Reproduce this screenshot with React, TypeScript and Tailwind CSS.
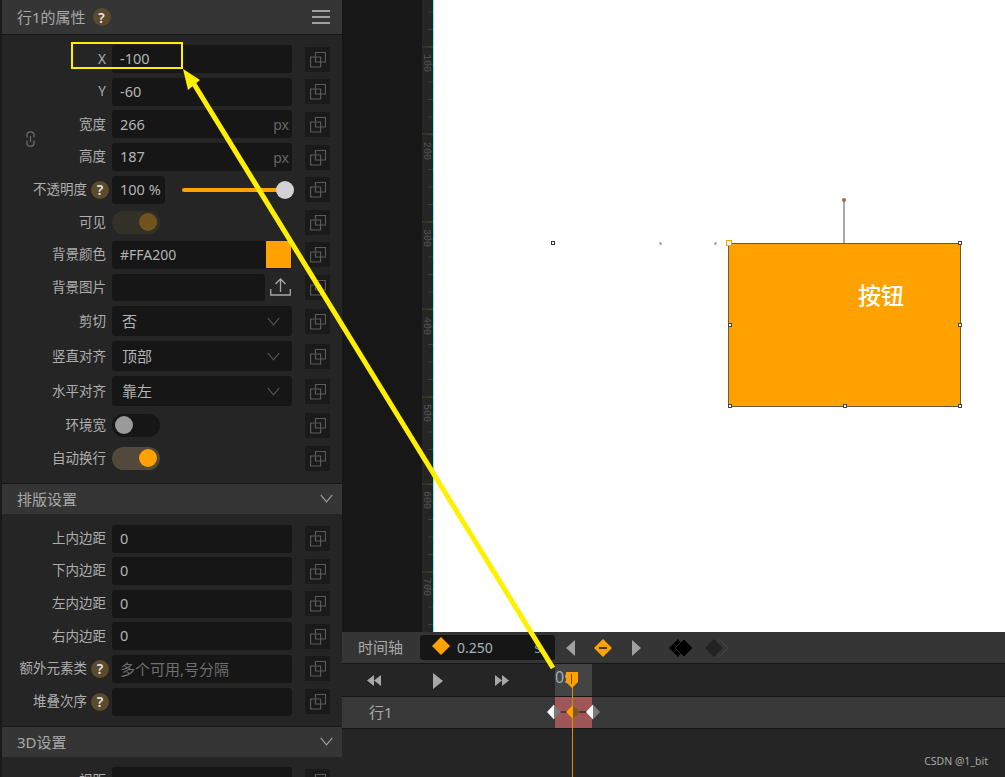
import React from 'react';

const font = { fontFamily: '"Noto Sans", "Noto Sans CJK SC", sans-serif' };

const CopyIcon = () => (
  <div className="w-[25px] h-[25px] bg-[#1a1a1a] flex items-center justify-center shrink-0 ml-[13px]">
    <svg width="16" height="17" viewBox="0 0 16 17" fill="none" stroke="#5a5a5a" strokeWidth="1.2">
      <path d="M5.5 5V1.5h10v9.5H11" />
      <path d="M.6 6h10v10H.6z" />
      <path d="M5.5 5.5v5.5H11" />
    </svg>
  </div>
);

const Help = () => (
  <span className="w-[18px] h-[18px] rounded-full bg-[#5c4a2c] text-[#e6e6e6] text-[14px] font-semibold flex items-center justify-center shrink-0 ml-[4px] mr-[3px]">
    ?
  </span>
);

const Chevron = ({ color = '#555555' }: { color?: string }) => (
  <svg width="13" height="9" viewBox="0 0 13 9" fill="none" stroke={color} strokeWidth="1.1">
    <path d="M.7.8l5.8 7 5.8-7" />
  </svg>
);

const Label = ({ text, help, h = 'h-[32.6px]', children }: { text: string; help?: boolean; h?: string; children: React.ReactNode }) => (
  <div className={`flex items-center pr-[12px] ${h}`}>
    <div className="w-[110px] flex items-center justify-end shrink-0">
      <span className={`text-[13.5px] leading-none text-[#aeaeae] whitespace-nowrap ${help ? '' : 'mr-[6px]'}`}>
        {text}
      </span>
      {help && <Help />}
    </div>
    <div className="w-[180px] flex items-center shrink-0">{children}</div>
    <CopyIcon />
  </div>
);

const Field = ({ value, unit, muted }: { value?: string; unit?: string; muted?: boolean }) => (
  <div className="w-full h-[28px] rounded-[3px] bg-[#161616] flex items-center justify-between pl-[8px] pr-[3px]">
    <span className={`${muted ? 'text-[15px] text-[#6f6f6f]' : 'text-[14.5px] text-[#b4b4b4]'}`}>{value}</span>
    {unit && <span className="text-[14px] text-[#666666]">{unit}</span>}
  </div>
);

const SelectBox = ({ value }: { value: string }) => (
  <div className="w-full h-[30px] rounded-[3px] bg-[#161616] flex items-center justify-between pl-[10px] pr-[12px]">
    <span className="text-[15px] text-[#b4b4b4]">{value}</span>
    <Chevron />
  </div>
);

const Toggle = ({ on, dim }: { on?: boolean; dim?: boolean }) => (
  <div
    className={`w-[48px] h-[23px] rounded-full flex items-center px-[3px] ${on ? 'justify-end' : 'justify-start'} ${
      dim ? 'bg-[#333028]' : on ? 'bg-[#514a3c]' : 'bg-[#161616]'
    }`}
  >
    <div className={`w-[18px] h-[18px] rounded-full ${dim ? 'bg-[#70531f]' : on ? 'bg-[#ffa200]' : 'bg-[#9a9a9a]'}`} />
  </div>
);

const SectionHeader = ({ title }: { title: string }) => (
  <div className="h-[31px] bg-[#353535] border-t border-[#161616] flex items-center justify-between pl-[15px] pr-[9px]">
    <span className="text-[15px] text-[#a8a8a8]">{title}</span>
    <Chevron color="#a0a0a0" />
  </div>
);

const paddingRows = ['上内边距', '下内边距', '左内边距', '右内边距'];

const Diamond = ({ size, className }: { size: number; className: string }) => (
  <svg width={size} height={size} viewBox="0 0 10 10" className={className}>
    <path d="M5 0l5 5-5 5-5-5z" fill="currentColor" />
  </svg>
);

const rulerMarks = [
  [47, '100', 63], [134, '200', 151], [222, '300', 238], [309, '400', 326],
  [397, '500', 413], [484, '600', 500], [572, '700', 587],
] as const;

const Ruler = () => (
  <svg width="11" height="632" className="block">
    {Array.from({ length: 37 }, (_, i) => 12 + i * 17.5).map((y) => (
      <line key={y} x1="6" x2="11" y1={y} y2={y} stroke="#3d3d3d" />
    ))}
    {rulerMarks.map(([y, label, ty]) => (
      <g key={label}>
        <line x1="0" x2="11" y1={y} y2={y} stroke="#4a4028" />
        <text
          x="0"
          y="0"
          transform={`translate(2 ${ty}) rotate(90)`}
          textAnchor="middle"
          fontSize="10"
          fill="#555555"
          fontFamily='"Liberation Mono", monospace'
        >
          {label}
        </text>
      </g>
    ))}
  </svg>
);

const Handle = ({ x, y }: { x: number; y: number }) => (
  <div className="absolute w-[4px] h-[4px] bg-white border border-[#444444]" style={{ left: x - 2, top: y - 2 }} />
);

export default function App() {
  return (
    <div className="relative w-[1005px] h-[777px] overflow-hidden flex bg-[#171717]" style={font}>
      {/* Property panel */}
      <div className="relative w-[342px] h-[777px] shrink-0 bg-[#252525] border-l-2 border-[#1a1a1a] overflow-hidden">
        <div className="h-[34px] bg-[#353535] flex items-center justify-between pl-[15px] pr-[12px]">
          <div className="flex items-center">
            <span className="text-[15px] text-[#a8a8a8]">行1的属性</span>
            <span className="ml-[3px]"><Help /></span>
          </div>
          <div className="w-[18px] flex flex-col gap-[4px]">
            <div className="h-[2px] bg-[#a0a0a0]" />
            <div className="h-[2px] bg-[#a0a0a0]" />
            <div className="h-[2px] bg-[#a0a0a0]" />
          </div>
        </div>

        <div className="pt-[8px] pb-[8px] border-t border-[#161616]">
          <Label text="X"><Field value="-100" /></Label>
          <Label text="Y"><Field value="-60" /></Label>
          <Label text="宽度"><Field value="266" unit="px" /></Label>
          <Label text="高度"><Field value="187" unit="px" /></Label>
          <Label text="不透明度" help>
            <div className="w-[53px] h-[28px] rounded-[3px] bg-[#161616] flex items-center pl-[8px] text-[14.5px] text-[#b4b4b4] shrink-0 whitespace-nowrap">
              100 %
            </div>
            <div className="relative ml-[17px] w-[103px] h-[4px] rounded-full bg-[#ffa200]">
              <div className="absolute right-[-9px] top-[-7px] w-[18px] h-[18px] rounded-full bg-[#d2d2d2]" />
            </div>
          </Label>
          <Label text="可见"><Toggle on dim /></Label>
          <Label text="背景颜色">
            <div className="w-full h-[28px] rounded-[3px] bg-[#161616] flex items-center justify-between pl-[8px] pr-[1px]">
              <span className="text-[14px] text-[#b4b4b4]">#FFA200</span>
              <div className="w-[25px] h-[27px] bg-[#ffa200]" />
            </div>
          </Label>
          <Label text="背景图片">
            <div className="w-[153px] h-[27px] rounded-[3px] bg-[#161616] shrink-0" />
            <svg width="21" height="18" viewBox="0 0 21 18" fill="none" stroke="#a8a8a8" strokeWidth="1.3" className="ml-[5px]">
              <path d="M10.5 14V1M5.5 6l5-5 5 5M.7 11v6h19.6v-6" />
            </svg>
          </Label>
          <Label text="剪切" h="h-[35px]"><SelectBox value="否" /></Label>
          <Label text="竖直对齐" h="h-[35px]"><SelectBox value="顶部" /></Label>
          <Label text="水平对齐" h="h-[35px]"><SelectBox value="靠左" /></Label>
          <Label text="环境宽" h="h-[33px]"><Toggle /></Label>
          <Label text="自动换行" h="h-[33px]"><Toggle on /></Label>
        </div>

        <SectionHeader title="排版设置" />
        <div className="pt-[8.5px] pb-[8px]">
          {paddingRows.map((name) => (
            <Label key={name} text={name}><Field value="0" /></Label>
          ))}
          <Label text="额外元素类" help><Field value="多个可用,号分隔" muted /></Label>
          <Label text="堆叠次序" help><Field /></Label>
        </div>

        <SectionHeader title="3D设置" />
        <div className="pt-[8px]">
          <Label text="视距"><Field /></Label>
        </div>

        {/* link width and height */}
        <svg width="9" height="16" viewBox="0 0 9 16" fill="none" stroke="#6a6a6a" strokeWidth="1.3" className="absolute left-[24px] top-[131px]">
          <path d="M1 6.5V3.8a3.5 3 0 0 1 7 0v2.7" />
          <path d="M1 9.5v2.7a3.5 3 0 0 0 7 0V9.5" />
          <path d="M4.5 5v6" />
        </svg>
      </div>

      <div className="flex-1 flex flex-col min-w-0">
        {/* Stage */}
        <div className="h-[632px] flex">
          <div className="w-[80px] bg-[#171717] shrink-0" />
          <div className="w-[11px] bg-[#252525] shrink-0">
            <Ruler />
          </div>
          <div className="relative flex-1 bg-white border-l border-[#6ff3f3]">
            <div className="absolute left-[117px] top-[241px] w-[4px] h-[4px] border border-[#333333] bg-white" />
            <div className="absolute left-[225px] top-[242px] w-[3px] h-[3px] rounded-full bg-[#aaaaaa]" />
            <div className="absolute left-[280px] top-[242px] w-[3px] h-[3px] rounded-full bg-[#aaaaaa]" />
            <div className="absolute left-[294px] top-[243px] w-[233px] h-[164px] bg-[#ffa200] border border-[#6b5a35] flex justify-center">
              <span className="mt-[36px] ml-[73px] text-[23px] font-medium text-white leading-[30px]">按钮</span>
            </div>
            <div className="absolute left-[292px] top-[240px] w-[6px] h-[6px] bg-white border border-[#ffa200]" />
            <div className="absolute left-[409px] top-[200px] w-[2px] h-[43px] bg-[#a8a8a8]" />
            <div className="absolute left-[408px] top-[198px] w-[4px] h-[4px] rounded-full bg-[#a0694a]" />
            <Handle x={526} y={243} />
            <Handle x={296} y={325} />
            <Handle x={526} y={325} />
            <Handle x={296} y={406} />
            <Handle x={411} y={406} />
            <Handle x={526} y={406} />
          </div>
        </div>

        {/* Timeline */}
        <div className="relative flex-1 bg-[#252525]">
          <div className="h-[32px] bg-[#353535] border-b border-[#161616] flex items-center">
            <span className="ml-[16px] w-[62px] text-[15px] text-[#a8a8a8]">时间轴</span>
            <div className="w-[135px] h-[25px] rounded-[3px] bg-[#161616] flex items-center pl-[12px] pr-[14px] shrink-0">
              <Diamond size={18} className="text-[#ffa200] -mt-[4px]" />
              <span className="ml-[7px] text-[14px] text-[#a8b4bc]">0.250</span>
              <span className="ml-auto text-[14px] text-[#8a9aa4]">s</span>
            </div>
            <svg width="10" height="16" viewBox="0 0 10 16" className="ml-[11px]"><path d="M9 0v16L0 8z" fill="#a0a0a0" /></svg>
            <svg width="18" height="18" viewBox="0 0 18 18" className="ml-[18px]">
              <path d="M9 0l9 9-9 9-9-9z" fill="#ffa200" />
              <path d="M5 8h8v2H5z" fill="#3a3a3a" />
            </svg>
            <svg width="10" height="16" viewBox="0 0 10 16" className="ml-[19px]"><path d="M1 0v16l9-8z" fill="#a0a0a0" /></svg>
            <svg width="24" height="18" viewBox="0 0 24 18" className="ml-[28px]">
              <path d="M9 0l9 9-9 9-9-9z" fill="#000000" />
              <path d="M15 0l9 9-9 9-9-9z" fill="#000000" stroke="#353535" strokeWidth="0.8" />
            </svg>
            <svg width="24" height="18" viewBox="0 0 24 18" className="ml-[12px]">
              <path d="M15 .7l8.3 8.3-8.3 8.3-8.3-8.3z" fill="none" stroke="#4a4a4a" />
              <path d="M9 0l9 9-9 9-9-9z" fill="#222222" />
            </svg>
          </div>

          <div className="h-[33px] flex border-b border-[#161616]">
            <div className="w-[213px] relative shrink-0">
              <svg width="14" height="11" viewBox="0 0 14 11" className="absolute left-[25px] top-[11px]">
                <path d="M7 0v11L0 5.5zM14 0v11L7 5.5z" fill="#a8a8a8" />
              </svg>
              <svg width="10" height="16" viewBox="0 0 10 16" className="absolute left-[91px] top-[9px]">
                <path d="M0 0v16l10-8z" fill="#a8a8a8" />
              </svg>
              <svg width="14" height="11" viewBox="0 0 14 11" className="absolute left-[153px] top-[11px]">
                <path d="M0 0v11l7-5.5zM7 0v11l7-5.5z" fill="#a8a8a8" />
              </svg>
            </div>
            <div className="w-[37px] bg-[#444444] text-[16px] leading-[26px] text-[#a0acb4]">0s</div>
          </div>

          <div className="h-[32px] bg-[#383838] flex border-b border-[#161616]">
            <span className="ml-[27px] w-[186px] text-[15px] leading-[31px] text-[#a8a8a8]">行1</span>
            <div className="w-[37px] bg-[#9e5656]" />
          </div>

          {/* Playhead and keyframes */}
          <div className="absolute left-[230px] top-[40px] bottom-0 w-[1px] bg-[#d98a0a]" />
          <svg width="12" height="16" viewBox="0 0 12 16" className="absolute left-[224px] top-[40px]">
            <path d="M0 0h12v10l-6 6-6-6z" fill="#ffa200" />
            <path d="M5.5 2v10" stroke="#6a4a10" strokeWidth="1" />
          </svg>
          <svg width="54" height="16" viewBox="0 0 54 16" className="absolute left-[205px] top-[72px]">
            <path d="M7 8h39" stroke="#111111" />
            <path d="M7 .5v15L0 8z" fill="#ffffff" />
            <path d="M7 .5L14 8l-7 7.5z" fill="#7a7a7a" />
            <path d="M26 1v14l-7-7z" fill="#ffa200" />
            <path d="M26 1l7 7-7 7z" fill="#7a5a20" />
            <path d="M46 .5v15L39 8z" fill="#ffffff" />
            <path d="M46 .5L53 8l-7 7.5z" fill="#7a7a7a" />
          </svg>

          <span className="absolute right-[17px] bottom-[9px] text-[10.5px] leading-[14px] text-[#a8a8a8]">CSDN @1_bit</span>
        </div>
      </div>

      {/* Annotation drawn over the screenshot */}
      <div className="absolute left-[71px] top-[42px] w-[112px] h-[27px] border-2 border-[#ffef00] pointer-events-none" />
      <svg width="1005" height="777" className="absolute left-0 top-0 pointer-events-none">
        <line x1="553" y1="668" x2="194" y2="84" stroke="#ffef00" strokeWidth="5" />
        <path d="M183 69l17 11-12 10z" fill="#ffef00" />
      </svg>
    </div>
  );
}
